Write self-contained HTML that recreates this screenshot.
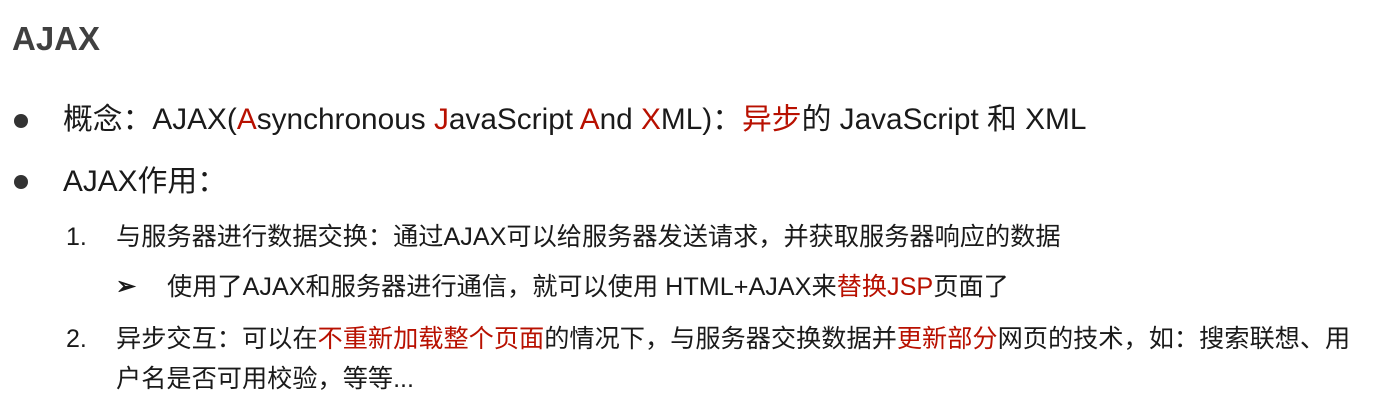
<!DOCTYPE html>
<html><head><meta charset="utf-8"><style>
html,body{margin:0;padding:0;background:#fff;width:1377px;height:409px;overflow:hidden}
body{font-family:"Liberation Sans","Noto Sans CJK SC",sans-serif;color:#1a1a1a;position:relative}
.l{position:absolute;white-space:nowrap;line-height:1}
.r{color:#b81000}
.dot{position:absolute;width:14px;height:14px;border-radius:50%;background:#333}
</style></head><body>
<div class="l" style="left:12px;top:22px;font-size:33px;font-weight:bold;color:#404040">AJAX</div>
<div class="dot" style="left:14px;top:114px"></div>
<div class="l" style="left:63px;top:105px;font-size:29.8px">概念：AJAX(<span class="r">A</span>synchronous <span class="r">J</span>avaScript <span class="r">A</span>nd <span class="r">X</span>ML)：<span class="r">异步</span>的 JavaScript 和 XML</div>
<div class="dot" style="left:14px;top:175px"></div>
<div class="l" style="left:63px;top:167px;font-size:29.8px">AJAX作用：</div>
<div class="l" style="left:66px;top:225px;font-size:25px">1.</div>
<div class="l" style="left:116px;top:225px;font-size:25.2px">与服务器进行数据交换：通过AJAX可以给服务器发送请求，并获取服务器响应的数据</div>
<div class="l" style="left:116px;top:275px;font-size:24px;font-weight:bold">➢</div>
<div class="l" style="left:167px;top:275px;font-size:25.2px">使用了AJAX和服务器进行通信，就可以使用 HTML+AJAX来<span class="r">替换JSP</span>页面了</div>
<div class="l" style="left:66px;top:327px;font-size:25px">2.</div>
<div class="l" style="left:116px;top:327px;font-size:25.2px">异步交互：可以在<span class="r">不重新加载整个页面</span>的情况下，与服务器交换数据并<span class="r">更新部分</span>网页的技术，如：搜索联想、用</div>
<div class="l" style="left:116px;top:367px;font-size:25.2px">户名是否可用校验，等等...</div>
</body></html>
